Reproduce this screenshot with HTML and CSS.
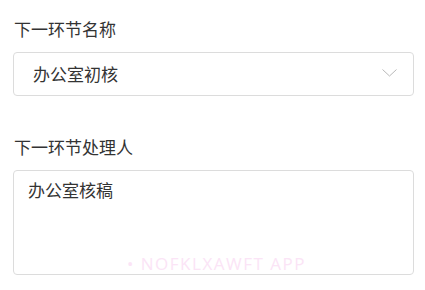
FILE: index.html
```html
<!DOCTYPE html>
<html lang="zh-CN">
<head>
    <meta charset="UTF-8">
    <meta name="viewport" content="width=device-width, initial-scale=1.0">
    <title>下一环节</title>
    <link rel="stylesheet" href="styles.css">
</head>
<body>

    <div class="form">
        <!-- Next step name -->
        <div class="form-item">
            <div class="form-label">下一环节名称</div>
            <div class="select-box">
                <span class="select-value">办公室初核</span>
                <svg class="select-arrow" width="15" height="8" viewBox="0 0 15 8">
                    <polyline points="0.5,0.5 7.5,7 14.5,0.5" fill="none" stroke="#b8b8b8" stroke-width="1"/>
                </svg>
            </div>
        </div>

        <!-- Next step handler -->
        <div class="form-item form-item-second">
            <div class="form-label">下一环节处理人</div>
            <div class="textarea-box">
                <div class="textarea-value">办公室核稿</div>
                <div class="watermark">• NOFKLXAWFT APP</div>
            </div>
        </div>
    </div>

</body>
</html>
```

FILE: styles.css
```css
/* Basic styling */
body {
    margin: 0;
    background: #fff;
    font-family: "Noto Sans CJK SC", "Noto Sans", sans-serif;
    color: #333;
}

.form {
    padding: 17px 11px 0 13px;
}

.form-label {
    font-size: 17px;
    line-height: 24px;
    margin-left: 1px;
}

.form-item-second {
    margin-top: 39px;
}

/* Select */
.select-box {
    margin-top: 11px;
    height: 44px;
    box-sizing: border-box;
    border: 1px solid #dcdcdc;
    border-radius: 4px;
    display: flex;
    align-items: center;
    justify-content: space-between;
    padding: 0 16px 0 19px;
}

.select-value {
    font-size: 17px;
    line-height: 24px;
}

.select-arrow {
    display: block;
    margin-top: -2px;
}

/* Textarea */
.textarea-box {
    position: relative;
    margin-top: 11px;
    height: 105px;
    box-sizing: border-box;
    border: 1px solid #dcdcdc;
    border-radius: 4px;
    padding: 7px 14px;
}

.textarea-value {
    font-size: 17px;
    line-height: 24px;
}

/* faint overlay text near the bottom edge */
.watermark {
    position: absolute;
    left: 113px;
    bottom: 0;
    font-family: "Open Sans", sans-serif;
    font-size: 17px;
    line-height: 20px;
    letter-spacing: 1.5px;
    color: #fbe4f6;
    white-space: nowrap;
}
```
